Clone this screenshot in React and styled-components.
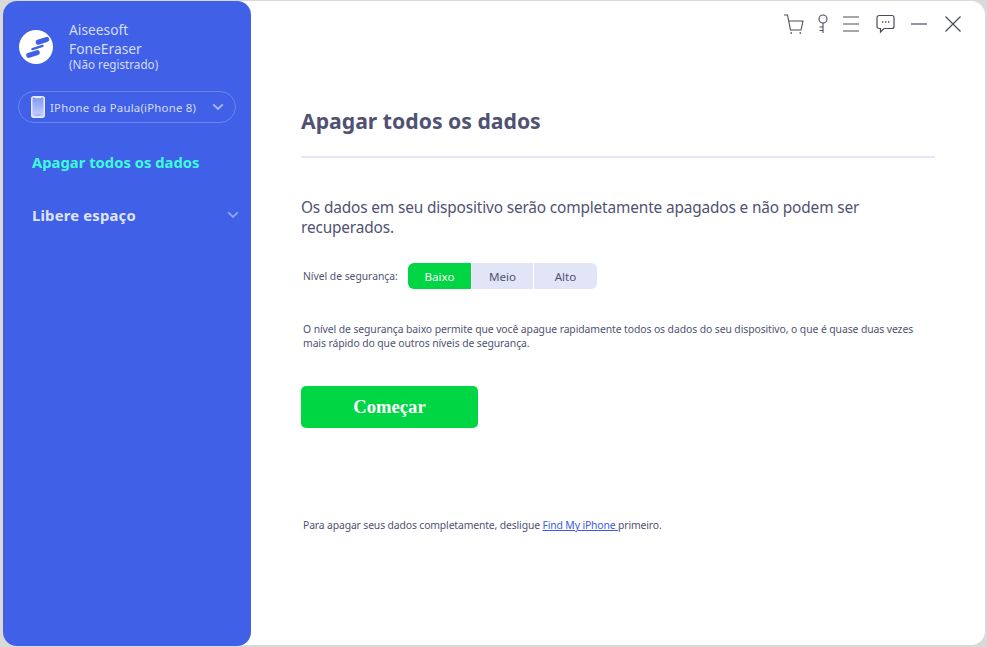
import React from 'react';
import styled, { createGlobalStyle } from 'styled-components';

const Global = createGlobalStyle`
  html, body { margin: 0; padding: 0; width: 987px; height: 647px; overflow: hidden; background: #d9d9d9; }
  * { box-sizing: border-box; }
`;
const Page = styled.div`
  width: 987px; height: 647px; padding: 1px 2px 2px 3px;
  font-family: "Noto Sans", Tahoma, sans-serif;
`;
const Win = styled.div`
  width: 100%; height: 100%; background: #fff; border-radius: 14px; display: flex;
`;
const Side = styled.aside`
  width: 248px; flex: none; background: #4160e8; border-radius: 14px; display: flex; flex-direction: column;
  padding: 20px 15px 0 15px; margin-bottom: -1px;
`;
const Brand = styled.div`
  display: flex; align-items: center; gap: 16px; padding-left: 1px; height: 52px;
`;
const BrandText = styled.div`
  color: #d3dcfb; font-size: 13.8px; line-height: 18.5px; white-space: nowrap; padding-bottom: 3px;
`;
const Small = styled.div`
  font-size: 11.7px; line-height: 12px;
`;
const Device = styled.div`
  margin-top: 18px; height: 32px; border: 1px solid #6a83ee; border-radius: 16px; display: flex; align-items: center;
  padding: 0 11px 0 12px; color: #d3dcfb; font-size: 11.4px; gap: 5px;
  letter-spacing: .22px; white-space: nowrap;
`;
const Chevron = styled.svg`
  flex: none; margin-left: auto; display: block;
`;
const Nav = styled.div`
  margin: 28px -3px 0 0; display: flex; flex-direction: column; gap: 31px; padding: 0 0 0 14px;
`;
const NavItem = styled.div`
  display: flex; align-items: center; height: 22px; font-size: 14.8px; font-weight: 700;
  letter-spacing: ${p => p.$active ? 0 : '.2px'};
  color: ${p => p.$active ? '#3dfbd8' : '#dfe5fd'}; white-space: nowrap;
`;
const Main = styled.main`
  flex: 1; min-width: 0; display: flex; flex-direction: column; padding: 0 50px; position: relative;
`;
const Tools = styled.div`
  position: absolute; top: 13px; right: 24px; display: flex; align-items: center;
`;
const ToolIcon = styled.svg`
  display: block; margin-left: ${p => p.$gap || 0}px; flex: none;
`;
const Title = styled.h1`
  margin: 105px 0 0; font-size: 21.2px; line-height: 30px; font-weight: 700; color: #4f5272;
`;
const Rule = styled.hr`
  margin: 20px 0 0; border: 0; height: 2px; background: #e4e6f8;
`;
const Lead = styled.p`
  margin: 40px 0 0; font-size: 15.4px; line-height: 20px; color: #4f5272; letter-spacing: -.15px;
`;
const Level = styled.div`
  margin-top: 25px; padding-left: 2px; display: flex; align-items: center; height: 26px;
`;
const LevelLabel = styled.span`
  font-size: 10.3px; color: #4f5272; width: 105px; white-space: nowrap;
`;
const Segs = styled.div`
  display: flex; gap: 1px; border-radius: 6px; overflow: hidden;
`;
const Seg = styled.div`
  height: 26px; width: ${p => p.$w}px; display: flex; align-items: center; justify-content: center; font-size: 11.6px;
  background: ${p => p.$on ? '#00d543' : '#e2e4f8'}; color: ${p => p.$on ? '#fff' : '#4f5272'};
`;
const Note = styled.p`
  margin: 33px 0 0; padding-left: 2px; font-size: 10.4px; line-height: 14px; color: #4f5272; letter-spacing: -.09px;
  width: 634px;
`;
const Start = styled.button`
  margin-top: 36px; width: 177px; height: 42px; border: 0; border-radius: 5px; background: #00d543; color: #fff;
  font-family: "Liberation Serif", serif; font-size: 18.6px; font-weight: 700; padding: 0;
`;
const Foot = styled.p`
  margin: 90px 0 0; padding-left: 2px; font-size: 10.4px; line-height: 14px; color: #4f5272; letter-spacing: -.14px;
`;
const Link = styled.a`
  color: #3b5be6; text-decoration: underline;
`;

const Logo = () => (
  <svg width="34" height="34" viewBox="0 0 34 34" style={{ flex: 'none', display: 'block' }}>
    <circle cx="17" cy="17" r="17" fill="#fff" />
    <g fill="#4160e8">
      <rect x="16.500" y="8.300" width="14" height="5" rx="2.300" transform="rotate(-18 23.500 10.800)" />
      <rect x="7" y="21.500" width="14" height="5" rx="2.300" transform="rotate(-18 14 24)" />
      <rect x="12" y="16.300" width="13" height="2.400" rx="1.200" transform="rotate(-18 18.500 17.500)" />
    </g>
  </svg>
);

const Phone = () => (
  <svg width="14" height="22" viewBox="0 0 14 22" style={{ flex: 'none', display: 'block' }}>
    <defs>
      <linearGradient id="ph" x1="0" y1="0" x2="0" y2="1">
        <stop offset="0" stopColor="#7f95f2" />
        <stop offset="1" stopColor="#c9d3fb" />
      </linearGradient>
    </defs>
    <rect x=".75" y=".75" width="12.500" height="20.500" rx="2" fill="url(#ph)" stroke="#e6ebfe" strokeWidth="1.500" />
    <path d="M4 1h6v1.200H4z" fill="#e6ebfe" />
    <path d="M4 19h6" stroke="#8ea2f5" strokeWidth="1" />
  </svg>
);

const ChevronIcon = ({ w, h, color }) => (
  <Chevron width={w} height={h} viewBox="0 0 12 8">
    <path d="M1.200 1.400 L6 6 L10.800 1.400" fill="none" stroke={color} strokeWidth="1.900" />
  </Chevron>
);

export default function App() {
  return (
    <>
      <Global />
      <Page>
        <Win>
          <Side>
            <Brand>
              <Logo />
              <BrandText>
                <div>Aiseesoft</div>
                <div>FoneEraser</div>
                <Small>(Não registrado)</Small>
              </BrandText>
            </Brand>
            <Device>
              <Phone />
              <span>IPhone da Paula(iPhone 8)</span>
              <ChevronIcon w={12} h={8} color="#a9b8f6" />
            </Device>
            <Nav>
              <NavItem $active>Apagar todos os dados</NavItem>
              <NavItem>
                Libere espaço
                <ChevronIcon w={12} h={8} color="#8fa2f3" />
              </NavItem>
            </Nav>
          </Side>
          <Main>
            <Tools>
              <ToolIcon width="20" height="20" viewBox="0 0 20 20" fill="none" stroke="#4a4c5c" strokeWidth="1.100">
                <path d="M0 1h3.500l3 15h10.500l2-9H4.800" />
                <path d="M6.500 19h1.500M15.500 19h1.500" strokeWidth="1.400" />
              </ToolIcon>
              <ToolIcon $gap={13} width="12" height="20" viewBox="0 0 12 20" fill="none" stroke="#4a4c5c" strokeWidth="1.100">
                <circle cx="6" cy="5" r="4" />
                <path d="M6 9v10M6 13h-3.500M6 16.500h-3.500" />
              </ToolIcon>
              <ToolIcon $gap={14} width="16" height="16" viewBox="0 0 16 16" fill="none" stroke="#4a4c5c" strokeWidth="1.200">
                <path d="M0 1h16M0 8h16M0 15h16" />
              </ToolIcon>
              <ToolIcon $gap={17} width="19" height="20" viewBox="0 0 19 20" fill="none" stroke="#4a4c5c" strokeWidth="1.200">
                <path d="M3 1.500h13a2 2 0 0 1 2 2v9a2 2 0 0 1-2 2H8L4.500 18v-3.500H3a2 2 0 0 1-2-2v-9a2 2 0 0 1 2-2z" />
                <path d="M6 8h1.400M9 8h1.400M12 8h1.400" strokeWidth="1.600" />
              </ToolIcon>
              <ToolIcon $gap={16} width="16" height="16" viewBox="0 0 16 16" fill="none" stroke="#4a4c5c" strokeWidth="1.200">
                <path d="M0 8h16" />
              </ToolIcon>
              <ToolIcon $gap={18} width="16" height="16" viewBox="0 0 16 16" fill="none" stroke="#4a4c5c" strokeWidth="1.200">
                <path d="M.5.5l15 15M15.500.5l-15 15" />
              </ToolIcon>
            </Tools>
            <Title>Apagar todos os dados</Title>
            <Rule />
            <Lead>Os dados em seu dispositivo serão completamente apagados e não podem ser recuperados.</Lead>
            <Level>
              <LevelLabel>Nível de segurança:</LevelLabel>
              <Segs>
                <Seg $on $w={63}>Baixo</Seg>
                <Seg $w={61}>Meio</Seg>
                <Seg $w={63}>Alto</Seg>
              </Segs>
            </Level>
            <Note>O nível de segurança baixo permite que você apague rapidamente todos os dados do seu dispositivo, o que é quase duas vezes mais rápido do que outros níveis de segurança.</Note>
            <div><Start>Começar</Start></div>
            <Foot>Para apagar seus dados completamente, desligue <Link>Find My iPhone </Link>primeiro.</Foot>
          </Main>
        </Win>
      </Page>
    </>
  );
}
